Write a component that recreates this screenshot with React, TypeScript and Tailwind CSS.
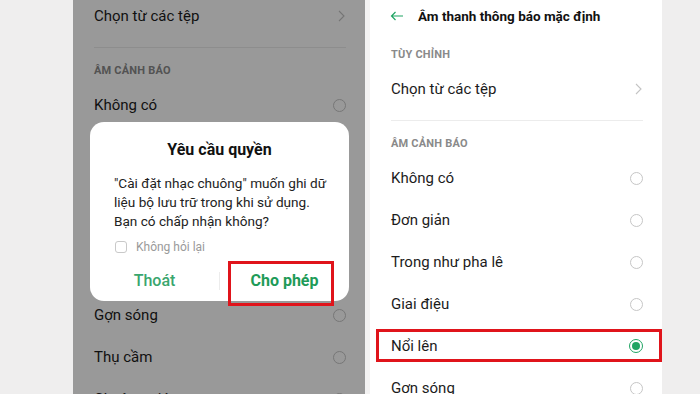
const tones = ["Không có", "Đơn giản", "Trong như pha lê", "Giai điệu", "Nổi lên", "Gợn sóng", "Thụ cầm", "Chuông gió"];

function Radio({ on }: { on?: boolean }) {
  if (on) {
    return (
      <span className="w-[14px] h-[14px] rounded-full border-[1.5px] border-[#1fa463] flex items-center justify-center">
        <span className="w-[8px] h-[8px] rounded-full bg-[#1fa463]" />
      </span>
    );
  }
  return <span className="w-[13px] h-[13px] rounded-full border border-[#c6c6c6]" />;
}

function Chevron() {
  return (
    <svg width="7" height="12" viewBox="0 0 7 12" fill="none">
      <path d="M1 1l5 5-5 5" stroke="#c4c4c4" strokeWidth="1.1" />
    </svg>
  );
}

function Row({ label, on, boxed }: { label: string; on?: boolean; boxed?: boolean }) {
  return (
    <div className="relative h-[42px] shrink-0 flex items-center justify-between pl-[21px] pr-[19px] text-[15px] text-[#1c1c1c]">
      <span>{label}</span>
      <Radio on={on} />
      {boxed && <div className="absolute left-[6px] right-0 top-[4px] h-[33px] border-[3px] border-[#e0141b]" />}
    </div>
  );
}

function SectionLabel({ text, className }: { text: string; className: string }) {
  return (
    <div className={`shrink-0 h-[26px] flex items-center px-[21px] text-[11px] font-bold text-[#8a8a8a] tracking-[0.2px] ${className}`}>
      {text}
    </div>
  );
}

function ChooseRow({ h }: { h: string }) {
  return (
    <div className={`${h} shrink-0 flex items-center justify-between pl-[21px] pr-[20px] text-[15px] text-[#1c1c1c]`}>
      <span>Chọn từ các tệp</span>
      <Chevron />
    </div>
  );
}

function LeftPhone() {
  return (
    <div className="relative w-[292px] h-full bg-white overflow-hidden flex flex-col">
      <ChooseRow h="h-[30px] mt-[1px]" />
      <div className="mt-[16px] h-px bg-[#ececec] ml-[21px] mr-[19px] shrink-0" />
      <SectionLabel text="ÂM CẢNH BÁO" className="mt-[10px]" />
      {tones.map((t) => (
        <Row key={t} label={t} />
      ))}
      <div className="absolute inset-0 bg-black/40" />
      <div className="absolute left-[17px] top-[122px] w-[259px] h-[179px] bg-white rounded-[14px] flex flex-col">
        <div className="h-[52px] pt-[4px] shrink-0 flex items-center justify-center text-[16px] font-bold text-[#111]">Yêu cầu quyền</div>
        <div className="pl-[24px] text-[13.6px] leading-[19px] text-[#222] whitespace-nowrap">
          <p>"Cài đặt nhạc chuông" muốn ghi dữ</p>
          <p>liệu bộ lưu trữ trong khi sử dụng.</p>
          <p>Bạn có chấp nhận không?</p>
        </div>
        <div className="mt-[7px] flex items-center pl-[25px] gap-[9px]">
          <span className="w-[12px] h-[12px] rounded-[3px] border border-[#c9c9c9]" />
          <span className="text-[12px] text-[#9a9a9a]">Không hỏi lại</span>
        </div>
        <div className="mt-[10px] flex items-center h-[30px]">
          <div className="flex-1 text-center text-[16px] font-medium text-[#3aa66e]">Thoát</div>
          <div className="w-px h-[18px] bg-[#ececec]" />
          <div className="flex-1 text-center text-[16px] font-bold text-[#1e9b58]">Cho phép</div>
        </div>
      </div>
      <div className="absolute left-[155px] top-[261px] w-[106px] h-[45px] border-[3px] border-[#e0141b]" />
    </div>
  );
}

function RightPhone() {
  return (
    <div className="w-[292px] h-full bg-white overflow-hidden flex flex-col">
      <div className="h-[32px] shrink-0 flex items-center pl-[20px]">
        <svg width="14" height="10" viewBox="0 0 14 10" fill="none">
          <path d="M13 5H1.5M5.5 1L1.5 5l4 4" stroke="#1fa463" strokeWidth="1.2" />
        </svg>
        <span className="ml-[14px] text-[13.5px] font-bold text-[#111]">Âm thanh thông báo mặc định</span>
      </div>
      <SectionLabel text="TÙY CHỈNH" className="mt-[9px] h-[28px]" />
      <ChooseRow h="h-[40px]" />
      <div className="mt-[11px] h-px bg-[#ececec] ml-[21px] mr-[19px] shrink-0" />
      <SectionLabel text="ÂM CẢNH BÁO" className="mt-[10px]" />
      {tones.slice(0, 6).map((t) => (
        <Row key={t} label={t} on={t === "Nổi lên"} boxed={t === "Nổi lên"} />
      ))}
    </div>
  );
}

export default function App() {
  return (
    <div className="w-[700px] h-[394px] overflow-hidden bg-[#efeeee] flex" style={{ fontFamily: "Roboto, 'Noto Sans', sans-serif" }}>
      <div className="w-[73px] shrink-0" />
      <LeftPhone />
      <div className="w-[5px] shrink-0 bg-[#f3f2f2]" />
      <RightPhone />
    </div>
  );
}
